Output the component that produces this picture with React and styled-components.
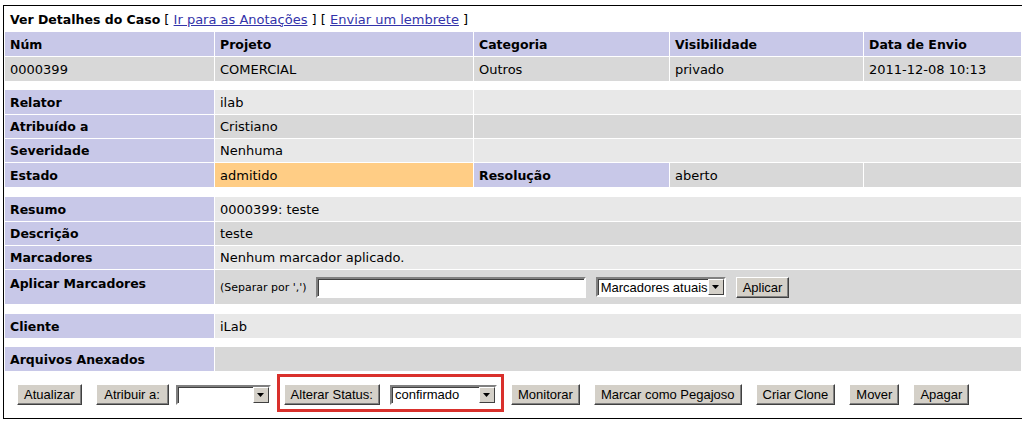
import React from 'react';
import styled, { createGlobalStyle } from 'styled-components';

const GlobalStyle = createGlobalStyle`
  body {
    margin: 0;
    background: #fff;
    color: #000;
    font-family: "DejaVu Sans", Verdana, sans-serif;
  }
`;

const tones = {
    head: '#c8c8e8',
    dark: '#d8d8d8',
    light: '#e8e8e8',
    state: '#ffcd85',
    blank: '#fff',
};

const Page = styled.div`
    padding: 5px 0 0 3px;
`;

const Table = styled.table`
    width: 1019px;
    table-layout: fixed;
    border-collapse: separate;
    border-spacing: 1px;
    border: 1px solid #000;
    border-right: none;
    font-size: 13px;
`;

const Row = styled.tr`
    height: ${({ $h }) => $h || 23}px;
`;

const Cell = styled.td`
    background: ${({ $tone }) => tones[$tone] || tones.light};
    padding: ${({ $top }) => ($top ? '6px 5px 0' : '0 5px')};
    font-weight: ${({ $bold }) => ($bold ? 700 : 400)};
    font-size: ${({ $bold }) => ($bold ? '12.5px' : '13px')};
    vertical-align: ${({ $top }) => ($top ? 'top' : 'middle')};
    white-space: nowrap;
    overflow: hidden;
`;

const Spacer = styled.td`
    padding: 0;
    background: #fff;
`;

const Title = styled.td`
    background: #fff;
    padding: 0 5px;
    white-space: nowrap;

    b {
        font-weight: 700;
        font-size: 12.5px;
    }
`;

const Link = styled.a`
    color: #3333aa;
    text-decoration: underline;
`;

const Inline = styled.div`
    display: flex;
    align-items: center;
    gap: 10px;
`;

const Hint = styled.span`
    font-size: 11px;
    margin-right: -1px;
`;

const TextInput = styled.input`
    box-sizing: border-box;
    width: 270px;
    height: 21px;
    margin: 0;
    background: #fff;
    border: 2px solid;
    border-color: #808080 #fff #fff #808080;
    box-shadow: inset 1px 1px #404040;
`;

const Select = styled.div`
    box-sizing: border-box;
    display: inline-flex;
    align-items: center;
    justify-content: space-between;
    width: ${({ $w }) => $w}px;
    height: 20px;
    padding-left: 3px;
    background: #fff;
    border: 2px solid;
    border-color: #808080 #fff #fff #808080;
    box-shadow: inset 1px 1px #404040;
    font: 13px "Liberation Sans", Arial, sans-serif;
    white-space: nowrap;
`;

const Arrow = styled.span`
    box-sizing: border-box;
    display: flex;
    align-items: center;
    justify-content: center;
    width: 16px;
    height: 16px;
    background: #d4d0c8;
    border: 1px solid;
    border-color: #fff #404040 #404040 #fff;
`;

const Button = styled.button`
    box-sizing: border-box;
    height: 21px;
    min-width: ${({ $w }) => ($w ? `${$w}px` : 'auto')};
    margin: 0;
    padding: 0 6px;
    background: #d4d0c8;
    border: 1px solid;
    border-color: #fff #404040 #404040 #fff;
    box-shadow: inset -1px -1px #808080;
    font: 13px "Liberation Sans", Arial, sans-serif;
    color: #000;
    white-space: nowrap;
`;

const Toolbar = styled.div`
    display: flex;
    align-items: center;
    gap: 14px;
`;

const Group = styled.div`
    display: flex;
    align-items: center;
    gap: ${({ $gap }) => $gap || 7}px;
`;

const Highlight = styled(Group)`
    margin: -10px -7px -7px -8px;
    padding: 7px 4px 4px;
    border: 3px solid #d9302c;
`;

const DropDown = ({ w, children }) => (
    <Select $w={w}>
        <span>{children}</span>
        <Arrow>
            <svg width="7" height="4" viewBox="0 0 7 4">
                <polygon points="0,0 7,0 3.5,4" fill="#000" />
            </svg>
        </Arrow>
    </Select>
);

const App = () => (
    <Page>
        <GlobalStyle />
        <Table>
            <colgroup>
                <col style={{ width: 209 }} />
                <col style={{ width: 258 }} />
                <col style={{ width: 195 }} />
                <col style={{ width: 193 }} />
                <col style={{ width: 157 }} />
            </colgroup>
            <tbody>
                <Row $h={24}>
                    <Title colSpan={5}>
                        <b>Ver Detalhes do Caso</b> [ <Link href="#notes">Ir para as Anotações</Link> ] [ <Link href="#remind">Enviar um lembrete</Link> ]
                    </Title>
                </Row>
                <Row $h={24}>
                    <Cell $tone="head" $bold>Núm</Cell>
                    <Cell $tone="head" $bold>Projeto</Cell>
                    <Cell $tone="head" $bold>Categoria</Cell>
                    <Cell $tone="head" $bold>Visibilidade</Cell>
                    <Cell $tone="head" $bold>Data de Envio</Cell>
                </Row>
                <Row $h={24}>
                    <Cell $tone="dark">0000399</Cell>
                    <Cell $tone="dark">COMERCIAL</Cell>
                    <Cell $tone="dark">Outros</Cell>
                    <Cell $tone="dark">privado</Cell>
                    <Cell $tone="dark">2011-12-08 10:13</Cell>
                </Row>
                <Row $h={7}><Spacer colSpan={5} /></Row>

                <Row $h={24}>
                    <Cell $tone="head" $bold>Relator</Cell>
                    <Cell $tone="light">ilab</Cell>
                    <Cell $tone="light" colSpan={3} />
                </Row>
                <Row>
                    <Cell $tone="head" $bold>Atribuído a</Cell>
                    <Cell $tone="dark">Cristiano</Cell>
                    <Cell $tone="dark" colSpan={3} />
                </Row>
                <Row>
                    <Cell $tone="head" $bold>Severidade</Cell>
                    <Cell $tone="light">Nenhuma</Cell>
                    <Cell $tone="light" colSpan={3} />
                </Row>
                <Row $h={24}>
                    <Cell $tone="head" $bold>Estado</Cell>
                    <Cell $tone="state">admitido</Cell>
                    <Cell $tone="head" $bold>Resolução</Cell>
                    <Cell $tone="dark">aberto</Cell>
                    <Cell $tone="dark" />
                </Row>
                <Row $h={8}><Spacer colSpan={5} /></Row>

                <Row $h={24}>
                    <Cell $tone="head" $bold>Resumo</Cell>
                    <Cell $tone="light" colSpan={4}>0000399: teste</Cell>
                </Row>
                <Row>
                    <Cell $tone="head" $bold>Descrição</Cell>
                    <Cell $tone="dark" colSpan={4}>teste</Cell>
                </Row>
                <Row>
                    <Cell $tone="head" $bold>Marcadores</Cell>
                    <Cell $tone="light" colSpan={4}>Nenhum marcador aplicado.</Cell>
                </Row>
                <Row $h={34}>
                    <Cell $tone="head" $bold $top>Aplicar Marcadores</Cell>
                    <Cell $tone="dark" colSpan={4}>
                        <Inline>
                            <Hint>(Separar por ',')</Hint>
                            <TextInput type="text" />
                            <DropDown w={130}>Marcadores atuais</DropDown>
                            <Button>Aplicar</Button>
                        </Inline>
                    </Cell>
                </Row>
                <Row $h={8}><Spacer colSpan={5} /></Row>

                <Row $h={24}>
                    <Cell $tone="head" $bold>Cliente</Cell>
                    <Cell $tone="light" colSpan={4}>iLab</Cell>
                </Row>
                <Row $h={7}><Spacer colSpan={5} /></Row>
                <Row $h={24}>
                    <Cell $tone="head" $bold>Arquivos Anexados</Cell>
                    <Cell $tone="dark" colSpan={4} />
                </Row>

                <Row $h={45}>
                    <Cell $tone="blank" colSpan={5} style={{ padding: '0 12px' }}>
                        <Toolbar>
                            <Button>Atualizar</Button>
                            <Group>
                                <Button $w={73}>Atribuir a:</Button>
                                <DropDown w={95} />
                            </Group>
                            <Highlight $gap={10}>
                                <Button>Alterar Status:</Button>
                                <DropDown w={107}>confirmado</DropDown>
                            </Highlight>
                            <Button>Monitorar</Button>
                            <Button>Marcar como Pegajoso</Button>
                            <Button>Criar Clone</Button>
                            <Button>Mover</Button>
                            <Button>Apagar</Button>
                        </Toolbar>
                    </Cell>
                </Row>
            </tbody>
        </Table>
    </Page>
);

export default App;
